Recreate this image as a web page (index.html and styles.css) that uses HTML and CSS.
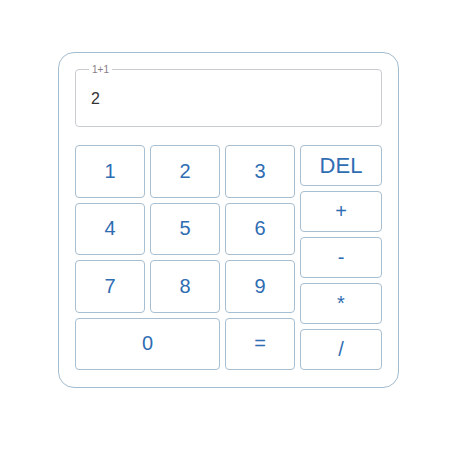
FILE: index.html
```html
<!DOCTYPE html>
<html>
<head>
<meta charset="utf-8">
<link rel="stylesheet" href="styles.css">
</head>
<body>
<div class="calc">
  <fieldset class="display">
    <legend class="expr">1+1</legend>
    <div class="result">2</div>
  </fieldset>
  <div class="keys">
    <div class="digits">
      <button class="key">1</button>
      <button class="key">2</button>
      <button class="key">3</button>
      <button class="key">4</button>
      <button class="key">5</button>
      <button class="key">6</button>
      <button class="key">7</button>
      <button class="key">8</button>
      <button class="key">9</button>
      <button class="key zero">0</button>
      <button class="key">=</button>
    </div>
    <div class="ops">
      <button class="key del">DEL</button>
      <button class="key">+</button>
      <button class="key">-</button>
      <button class="key">*</button>
      <button class="key">/</button>
    </div>
  </div>
</div>
</body>
</html>
```
FILE: styles.css
```css
html, body {
  margin: 0;
  padding: 0;
  background: #ffffff;
}

body {
  font-family: "Liberation Sans", Arial, sans-serif;
}

.calc {
  box-sizing: border-box;
  width: 341px;
  margin: 52px 0 0 58px;
  padding: 11px 16px 17px 16px;
  border: 1px solid #a3bccf;
  border-radius: 16px;
}

.display {
  margin: 0;
  padding: 15px 14px 18px 15px;
  border: 1px solid #c9cdd2;
  border-radius: 4px;
  min-width: 0;
}

.expr {
  padding: 0 3px;
  margin-left: -2px;
  font-size: 10px;
  color: #887c88;
}

.result {
  font-size: 16px;
  color: #333333;
  line-height: 18px;
}

.keys {
  display: flex;
  gap: 5px;
  margin-top: 18px;
  height: 225px;
}

.digits {
  display: grid;
  grid-template-columns: repeat(3, 70px);
  grid-template-rows: repeat(4, 1fr);
  gap: 5px;
}

.zero {
  grid-column: span 2;
}

.ops {
  display: flex;
  flex-direction: column;
  gap: 5px;
  width: 82px;
}

.ops .key {
  flex: 1;
}

.key {
  box-sizing: border-box;
  margin: 0;
  padding: 0;
  background: #ffffff;
  border: 1px solid #a8bfd1;
  border-radius: 4px;
  font-family: "Liberation Sans", Arial, sans-serif;
  font-size: 20px;
  color: #2f6db3;
  cursor: pointer;
}

.del {
  font-size: 22px;
}
```
